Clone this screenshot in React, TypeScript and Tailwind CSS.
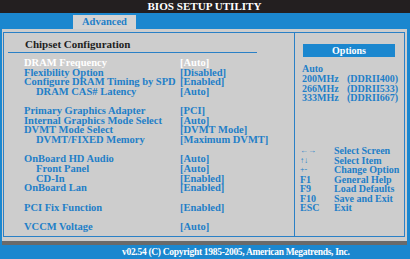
import React from "react";

type Row = { label?: string; value?: string; indent?: boolean; hl?: boolean; gap?: boolean };

const rows: Row[] = [
  { label: "DRAM Frequency", value: "[Auto]", hl: true },
  { label: "Flexibility Option", value: "[Disabled]" },
  { label: "Configure DRAM Timing by SPD", value: "[Enabled]" },
  { label: "DRAM CAS# Latency", value: "[Auto]", indent: true },
  { gap: true },
  { label: "Primary Graphics Adapter", value: "[PCI]" },
  { label: "Internal Graphics Mode Select", value: "[Auto]" },
  { label: "DVMT Mode Select", value: "[DVMT Mode]" },
  { label: "DVMT/FIXED Memory", value: "[Maximum DVMT]", indent: true },
  { gap: true },
  { label: "OnBoard HD Audio", value: "[Auto]" },
  { label: "Front Panel", value: "[Auto]", indent: true },
  { label: "CD-In", value: "[Enabled]", indent: true },
  { label: "OnBoard Lan", value: "[Enabled]" },
  { gap: true },
  { label: "PCI Fix Function", value: "[Enabled]" },
  { gap: true },
  { label: "VCCM Voltage", value: "[Auto]" },
];

const keys: [string, string, boolean][] = [
  ["←→", "Select Screen", true],
  ["↑↓", "Select Item", true],
  ["+-", "Change Option", true],
  ["F1", "General Help", false],
  ["F9", "Load Defaults", false],
  ["F10", "Save and Exit", false],
  ["ESC", "Exit", false],
];

export default function App() {
  return (
    <div
      className="w-[410px] h-[259px] flex flex-col overflow-hidden font-bold text-[#1f7fc8]"
      style={{ fontFamily: '"Liberation Serif", "Times New Roman", serif' }}
    >
      <div className="h-[13px] bg-[#231f20] text-white text-[11.1px] leading-[13px] text-center pr-[1px]">
        BIOS SETUP UTILITY
      </div>
      <div className="h-[16px] bg-[#1b87cf] flex items-end pl-[73px]">
        <div className="w-[63px] h-[14px] bg-[#d3d3d3] text-[10.5px] leading-[14px] text-center text-[#1f7fc8]">
          Advanced
        </div>
      </div>
      <div className="h-[212px] bg-[#1b87cf] px-[2px] pr-[3px]">
        <div className="h-full bg-[#cdcdcd] pt-[3px] pl-[1px] pr-[2px] pb-[4px]">
          <div className="h-full border border-[#2a80c6] flex">
            <div className="w-[291px] border-r border-[#2a80c6] flex flex-col pt-[5px]">
              <div className="pl-[21px] text-[11px] leading-[12px] text-[#1e1e1e]">Chipset Configuration</div>
              <div className="ml-[4px] w-[249px] h-[1px] bg-[#2a80c6] mt-[2px]"></div>
              <div className="flex flex-col mt-[5px] text-[10.5px]">
                {rows.map((r, i) =>
                  r.gap ? (
                    <div key={i} className="h-[9.65px]"></div>
                  ) : (
                    <div key={i} className={`h-[9.65px] leading-[9.65px] flex whitespace-nowrap ${r.hl ? "text-white" : ""}`}>
                      <div className={`w-[176px] ${r.indent ? "pl-[32px]" : "pl-[20px]"}`}>{r.label}</div>
                      <div>{r.value}</div>
                    </div>
                  )
                )}
              </div>
            </div>
            <div className="flex-1 flex flex-col pt-[11px]">
              <div className="ml-[8px] w-[92px] h-[13px] bg-[#1b87cf] text-white text-[10px] leading-[13px] text-center">
                Options
              </div>
              <div className="mt-[7px] pl-[7px] text-[10px] leading-[9.8px] whitespace-nowrap">
                <div>Auto</div>
                <div className="flex"><span className="w-[45px]">200MHz</span><span>(DDRII400)</span></div>
                <div className="flex"><span className="w-[45px]">266MHz</span><span>(DDRII533)</span></div>
                <div className="flex"><span className="w-[45px]">333MHz</span><span>(DDRII667)</span></div>
              </div>
              <div className="mt-[43px] pl-[5px] text-[10px] leading-[9.55px] whitespace-nowrap">
                {keys.map(([k, d, thin]) => (
                  <div key={k} className="flex">
                    <span className={`w-[34px] ${thin ? "font-normal text-[8px]" : ""}`}>{k}</span>
                    <span>{d}</span>
                  </div>
                ))}
              </div>
            </div>
          </div>
        </div>
      </div>
      <div className="h-[4px] bg-[#1b87cf] px-[2px] pr-[3px]">
        <div className="h-full bg-[#6a6a6a]"></div>
      </div>
      <div className="h-[14px] bg-[#1b87cf] text-white text-[9.5px] leading-[14px] tracking-[-0.3px] pl-[122px] whitespace-nowrap">
        v02.54 (C) Copyright 1985-2005, American Megatrends, Inc.
      </div>
    </div>
  );
}
